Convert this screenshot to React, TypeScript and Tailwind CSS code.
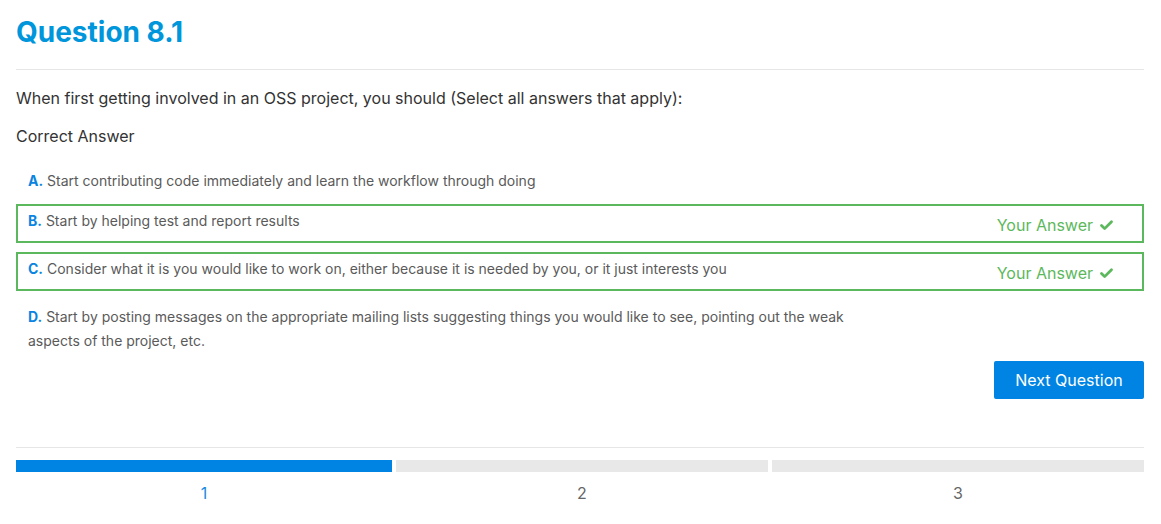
import { Check } from 'lucide-react';

const options = [
  { key: 'A', text: 'Start contributing code immediately and learn the workflow through doing', picked: false },
  { key: 'B', text: 'Start by helping test and report results', picked: true },
  { key: 'C', text: 'Consider what it is you would like to work on, either because it is needed by you, or it just interests you', picked: true },
  {
    key: 'D',
    text: 'Start by posting messages on the appropriate mailing lists suggesting things you would like to see, pointing out the weak aspects of the project, etc.',
    picked: false,
  },
];

const steps = [1, 2, 3];

const App = () => {
  return (
    <div className="min-h-screen bg-white pl-4 pr-[17px] pt-[14px] font-['Inter',sans-serif] text-[#333]">
      <h1 className="text-[28px] font-bold leading-[36px] text-[#0096db]">Question 8.1</h1>

      <hr className="mt-[19px] border-t border-[#e6e6e6]" />

      <p className="mt-4 text-base leading-6">
        When first getting involved in an OSS project, you should (Select all answers that apply):
      </p>
      <p className="mt-[14px] text-base leading-6">Correct Answer</p>

      <div className="mt-4 flex flex-col">
        {options.map((opt, i) => (
          <div
            key={opt.key}
            className={
              opt.picked
                ? 'mb-[9px] flex min-h-[39px] border-2 border-[#5cb85c] pl-[10px]'
                : i === 0
                  ? 'flex min-h-[40px] border-2 border-transparent pl-[10px]'
                  : 'flex min-h-[39px] border-2 border-transparent pl-[10px]'
            }
          >
            <p className="w-3/4 pt-[3px] text-sm leading-6 text-[#5a5a5a]">
              <span className="font-bold text-[#0a84e0]">{opt.key}.</span> {opt.text}
            </p>
            {opt.picked && (
              <div className="flex flex-1 items-start justify-end pr-[28px] pt-[7px] text-base leading-6 text-[#5cb85c]">
                <span>Your Answer</span>
                <Check className="ml-[6px] mt-[5px] h-[15px] w-[15px]" strokeWidth={4.5} />
              </div>
            )}
          </div>
        ))}
      </div>

      <div className="mt-[6px] flex justify-end">
        <button className="h-[38px] w-[150px] rounded-[2px] bg-[#0084e3] text-base text-white">Next Question</button>
      </div>

      <hr className="mt-12 border-t border-[#e6e6e6]" />

      <div className="mt-3 grid grid-cols-[376px_1fr_1fr] gap-1">
        {steps.map((s) => (
          <div key={s} className="flex flex-col items-center">
            <div className={s === 1 ? 'h-3 w-full bg-[#0084e3]' : 'h-3 w-full bg-[#e8e8e8]'} />
            <span className={s === 1 ? 'mt-[9px] text-base leading-6 text-[#1a8ae0]' : 'mt-[9px] text-base leading-6 text-[#666]'}>
              {s}
            </span>
          </div>
        ))}
      </div>
    </div>
  );
};

export default App;
